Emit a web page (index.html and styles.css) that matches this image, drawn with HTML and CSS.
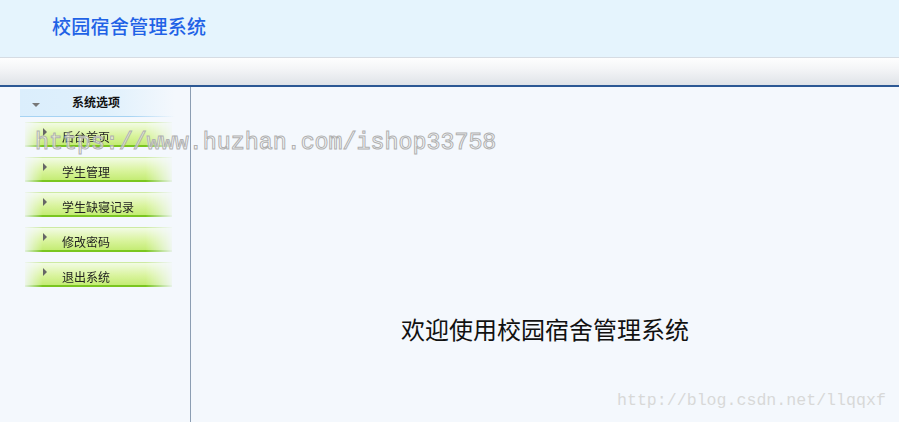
FILE: index.html
```html
<!DOCTYPE html>
<html lang="zh">
<head>
<meta charset="utf-8">
<title>校园宿舍管理系统</title>
<link rel="stylesheet" href="styles.css">
</head>
<body>
<div class="page">
  <header class="top">
    <h1 class="title">校园宿舍管理系统</h1>
  </header>
  <div class="bar"></div>
  <div class="main">
    <aside class="side">
      <div class="side-head">
        <span class="down"></span>
        <span class="side-title">系统选项</span>
      </div>
      <ul class="menu">
        <li class="item"><span class="tri"></span><span class="label">后台首页</span></li>
        <li class="item"><span class="tri"></span><span class="label">学生管理</span></li>
        <li class="item"><span class="tri"></span><span class="label">学生缺寝记录</span></li>
        <li class="item"><span class="tri"></span><span class="label">修改密码</span></li>
        <li class="item"><span class="tri"></span><span class="label">退出系统</span></li>
      </ul>
    </aside>
    <section class="content">
      <p class="welcome">欢迎使用校园宿舍管理系统</p>
    </section>
  </div>
  <div class="wm1">https://www.huzhan.com/ishop33758</div>
  <div class="wm2">http://blog.csdn.net/llqqxf</div>
</div>
</body>
</html>
```

FILE: styles.css
```css
html, body {
  margin: 0;
  padding: 0;
}
body {
  width: 899px;
  height: 422px;
  overflow: hidden;
  background: #f4f8fd;
  font-family: "Noto Sans CJK SC", "Noto Sans", sans-serif;
}
.page {
  position: relative;
  width: 899px;
  height: 422px;
  display: flex;
  flex-direction: column;
}
.top {
  height: 57px;
  background: #e5f4fd;
  border-bottom: 1px solid #d6dce3;
  display: flex;
  align-items: center;
  padding-left: 52px;
}
.title {
  margin: 0;
  font-size: 19px;
  font-weight: 500;
  color: #1f62e6;
  line-height: 1;
  position: relative;
  top: -3px;
  letter-spacing: 0.3px;
}
.bar {
  height: 27px;
  background: linear-gradient(#fefefe, #f4f5f7 40%, #dfe3e8);
  border-bottom: 2px solid #2c5894;
}
.main {
  flex: 1;
  display: flex;
}
.side {
  width: 191px;
  border-right: 1px solid #8c9eb3;
  background: #f4f8fd;
  box-sizing: border-box;
}
.side-head {
  margin: 2px 0 0 20px;
  width: 155px;
  height: 28px;
  box-sizing: border-box;
  background:
    linear-gradient(to right, #a6d3f3, #a6d3f3 70%, rgba(166,211,243,0)) bottom left / 100% 1px no-repeat,
    linear-gradient(to right, #dbeefc, #dff0fc 55%, #f4f8fd);
  display: flex;
  align-items: center;
}
.down {
  width: 0;
  height: 0;
  border-left: 4px solid transparent;
  border-right: 4px solid transparent;
  border-top: 4px solid #777;
  margin-left: 12px;
  margin-top: 3px;
}
.side-title {
  margin-left: 32px;
  font-size: 12px;
  font-weight: bold;
  color: #111;
  position: relative;
  top: -2px;
}
.menu {
  list-style: none;
  margin: 5px 0 0 25px;
  padding: 0;
}
.item {
  width: 147px;
  height: 22px;
  border-top: 1px solid #cdeaa2;
  border-bottom: 2px solid #7ac620;
  background: linear-gradient(#f2fbe4, #daf4a0 55%, #c4ec74);
  margin-bottom: 10px;
  display: flex;
  align-items: center;
  -webkit-mask-image: linear-gradient(to right, rgba(0,0,0,0.15), #000 12%, #000 82%, rgba(0,0,0,0.1));
  mask-image: linear-gradient(to right, rgba(0,0,0,0.15), #000 12%, #000 82%, rgba(0,0,0,0.1));
}
.tri {
  width: 0;
  height: 0;
  border-top: 4px solid transparent;
  border-bottom: 4px solid transparent;
  border-left: 4px solid #666;
  margin-left: 18px;
  margin-top: -4px;
}
.label {
  margin-left: 15px;
  font-size: 12px;
  color: #222;
  position: relative;
  top: 2px;
}
.content {
  flex: 1;
  display: flex;
  justify-content: center;
}
.welcome {
  margin: 227px 0 0 0;
  font-size: 24px;
  line-height: 30px;
  color: #111;
  font-family: "Noto Sans CJK SC", sans-serif;
}
.wm1 {
  position: absolute;
  left: 35px;
  top: 128px;
  font-family: "Liberation Mono", monospace;
  font-size: 23.3px;
  line-height: 30px;
  color: rgba(255,255,255,0.6);
  -webkit-text-stroke: 1px #b0b0b0;
  white-space: nowrap;
}
.wm2 {
  position: absolute;
  left: 617px;
  top: 390px;
  font-family: "Liberation Mono", monospace;
  font-size: 16.6px;
  line-height: 22px;
  color: #d8d8d8;
  white-space: nowrap;
}
```
